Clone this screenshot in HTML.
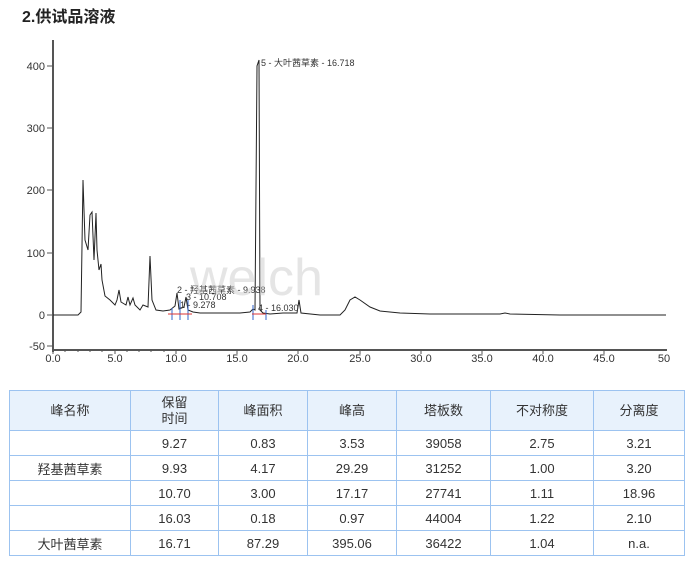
<!DOCTYPE html>
<html><head><meta charset="utf-8"><style>
body{margin:0;background:#fff;width:692px;height:565px;overflow:hidden;font-family:"Liberation Sans","Noto Sans CJK SC",sans-serif;}
h2{position:absolute;left:22px;top:3px;margin:0;font-size:16px;font-weight:bold;color:#222;}
svg{position:absolute;left:0;top:0}
table{position:absolute;left:9px;top:390px;border-collapse:collapse;font-size:13px;color:#333;}
td{border:1px solid #9cc3f0;text-align:center;height:24px;padding:0;}
tr.h td{background:#e8f2fc;height:39px;line-height:16px}
</style></head><body>
<h2>2.供试品溶液</h2>
<svg width="692" height="380" font-family="Liberation Sans, Noto Sans CJK SC, sans-serif" font-size="10">
<line x1="53" y1="40" x2="53" y2="352" stroke="#555" stroke-width="2"/>
<line x1="52" y1="350" x2="667" y2="350" stroke="#555" stroke-width="2"/>
<g stroke="#555">
<line x1="47" y1="66" x2="53" y2="66"/><line x1="47" y1="128" x2="53" y2="128"/><line x1="47" y1="190" x2="53" y2="190"/><line x1="47" y1="253" x2="53" y2="253"/><line x1="47" y1="315" x2="53" y2="315"/><line x1="47" y1="346" x2="53" y2="346"/>
</g>
<g fill="#333" text-anchor="end" font-size="11">
<text x="45" y="70">400</text><text x="45" y="132">300</text><text x="45" y="194">200</text><text x="45" y="257">100</text><text x="45" y="319">0</text><text x="45" y="350">-50</text>
</g>
<g fill="#333" text-anchor="middle" font-size="11">
<text x="53" y="362">0.0</text><text x="115" y="362">5.0</text><text x="176" y="362">10.0</text><text x="237" y="362">15.0</text><text x="298" y="362">20.0</text><text x="360" y="362">25.0</text><text x="421" y="362">30.0</text><text x="482" y="362">35.0</text><text x="543" y="362">40.0</text><text x="604" y="362">45.0</text><text x="664" y="362">50</text>
</g>
<g stroke="#555"><path d="M53 350 V354 M65 350V352 M78 350V352 M90 350V352 M102 350V352 M115 350V354 M127 350V352 M139 350V352 M151 350V352 M164 350V352 M176 350V354 M237 350V354 M298 350V354 M360 350V354 M421 350V354 M482 350V354 M543 350V354 M604 350V354"/></g>
<polyline fill="none" stroke="#222" stroke-width="1" points="53,315 78,315 81,312 83,180 85,240 88,250 90,215 92,212 94,260 96,213 97,250 99,270 101,264 102,280 105,296 110,300 115,305 117,300 119,290 121,302 126,305 128,297 130,305 133,298 135,305 140,310 143,305 148,307 150,256 152,300 156,310 163,311 170,310 175,306 177,293 179,309 184,307 186,297 188,310 193,312 200,313 210,313 220,313 240,313 250,312 253,309 255,310 257,66 259,60 260,310 263,313 270,314 283,313 297,313 299,300 301,313 320,315 340,315 345,310 350,300 355,297 360,300 370,307 380,311 400,313 430,314 500,314 505,313 510,314 560,315 666,315"/>
<g stroke="#36c" stroke-width="1"><line x1="172" y1="308" x2="172" y2="320"/><line x1="180" y1="300" x2="180" y2="320"/><line x1="188" y1="300" x2="188" y2="320"/><line x1="253" y1="305" x2="253" y2="320"/><line x1="266" y1="310" x2="266" y2="320"/></g>
<g stroke="#d33"><line x1="168" y1="314" x2="192" y2="314"/><line x1="252" y1="314" x2="266" y2="314"/></g>
<g fill="#333" font-size="9"><text x="261" y="66">5 - 大叶茜草素 - 16.718</text><text x="177" y="293">2 - 羟基茜草素 - 9.938</text><text x="186" y="300">3 - 10.708</text><text x="180" y="308">1 - 9.278</text><text x="258" y="311">4 - 16.030</text></g>
<text x="190" y="295" font-size="52" fill="#ccc" opacity="0.5">welch</text>
</svg>
<table>
<colgroup><col style="width:121px"><col style="width:88px"><col style="width:89px"><col style="width:89px"><col style="width:94px"><col style="width:103px"><col style="width:91px"></colgroup>
<tr class="h"><td>峰名称</td><td>保留<br>时间</td><td>峰面积</td><td>峰高</td><td>塔板数</td><td>不对称度</td><td>分离度</td></tr>
<tr><td></td><td>9.27</td><td>0.83</td><td>3.53</td><td>39058</td><td>2.75</td><td>3.21</td></tr>
<tr><td>羟基茜草素</td><td>9.93</td><td>4.17</td><td>29.29</td><td>31252</td><td>1.00</td><td>3.20</td></tr>
<tr><td></td><td>10.70</td><td>3.00</td><td>17.17</td><td>27741</td><td>1.11</td><td>18.96</td></tr>
<tr><td></td><td>16.03</td><td>0.18</td><td>0.97</td><td>44004</td><td>1.22</td><td>2.10</td></tr>
<tr><td>大叶茜草素</td><td>16.71</td><td>87.29</td><td>395.06</td><td>36422</td><td>1.04</td><td>n.a.</td></tr>
</table>
</body></html>
